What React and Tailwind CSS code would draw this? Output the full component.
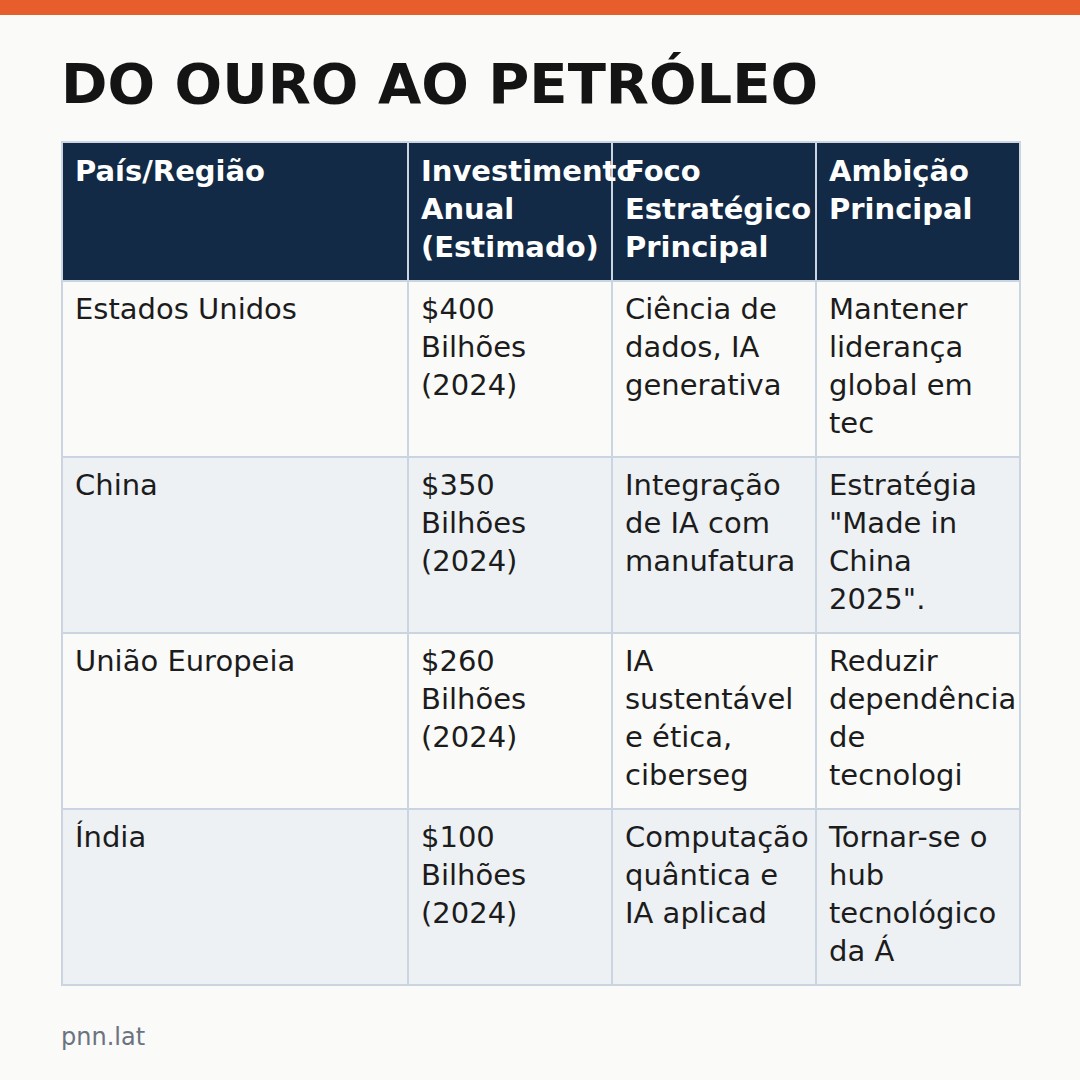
import React from 'react';
import clsx from 'clsx';

const headers = ['País/Região', 'Investimento Anual (Estimado)', 'Foco Estratégico Principal', 'Ambição Principal'];

const rows = [
  ['Estados Unidos', '$400 Bilhões (2024)', 'Ciência de dados, IA generativa', 'Mantener liderança global em tec'],
  ['China', '$350 Bilhões (2024)', 'Integração de IA com manufatura', 'Estratégia "Made in China 2025".'],
  ['União Europeia', '$260 Bilhões (2024)', 'IA sustentável e ética, ciberseg', 'Reduzir dependência de tecnologi'],
  ['Índia', '$100 Bilhões (2024)', 'Computação quântica e IA aplicad', 'Tornar-se o hub tecnológico da Á'],
];

const font = { fontFamily: '"DejaVu Sans", Verdana, sans-serif' };

function Cell({ children, col, last, header, striped }) {
  return (
    <div
      className={clsx(
        'border-l-2 border-t-2 border-[#cbd5e1] px-[12px] text-[29px] leading-[38px]',
        col === 3 && 'border-r-2',
        last && 'border-b-2',
        header ? 'h-[139px] bg-[#122a45] pt-[9px] font-bold text-white' : 'pt-[8px] text-[#1c1c1c]',
        !header && (last ? 'h-[178px]' : 'h-[176px]'),
        !header && (striped ? 'bg-[#edf1f4]' : 'bg-[#fafaf8]'),
      )}
    >
      {/* relative so overflowing words paint above the next cell's background */}
      <span className="relative">{children}</span>
    </div>
  );
}

export default function App() {
  return (
    <div className="h-[1080px] w-[1080px] overflow-hidden bg-[#fafaf8]" style={font}>
      <div className="h-[15px] bg-[#e85d2c]" />
      <div className="px-[61px] pt-[41px]">
        <h1 className="text-[56px] font-bold leading-[56px] text-[#141414]">DO OURO AO PETRÓLEO</h1>

        <div className="mt-[29px] grid w-[960px] grid-cols-[346px_204px_204px_206px]">
          {headers.map((h, i) => (
            <Cell key={h} col={i} header>
              {h}
            </Cell>
          ))}
          {rows.map((row, r) =>
            row.map((text, i) => (
              <Cell key={r + '-' + i} col={i} striped={r % 2 === 1} last={r === rows.length - 1}>
                {text}
              </Cell>
            )),
          )}
        </div>

        <p className="mt-[35px] text-[24px] leading-[32px] text-[#6b7280]">pnn.lat</p>
      </div>
    </div>
  );
}
